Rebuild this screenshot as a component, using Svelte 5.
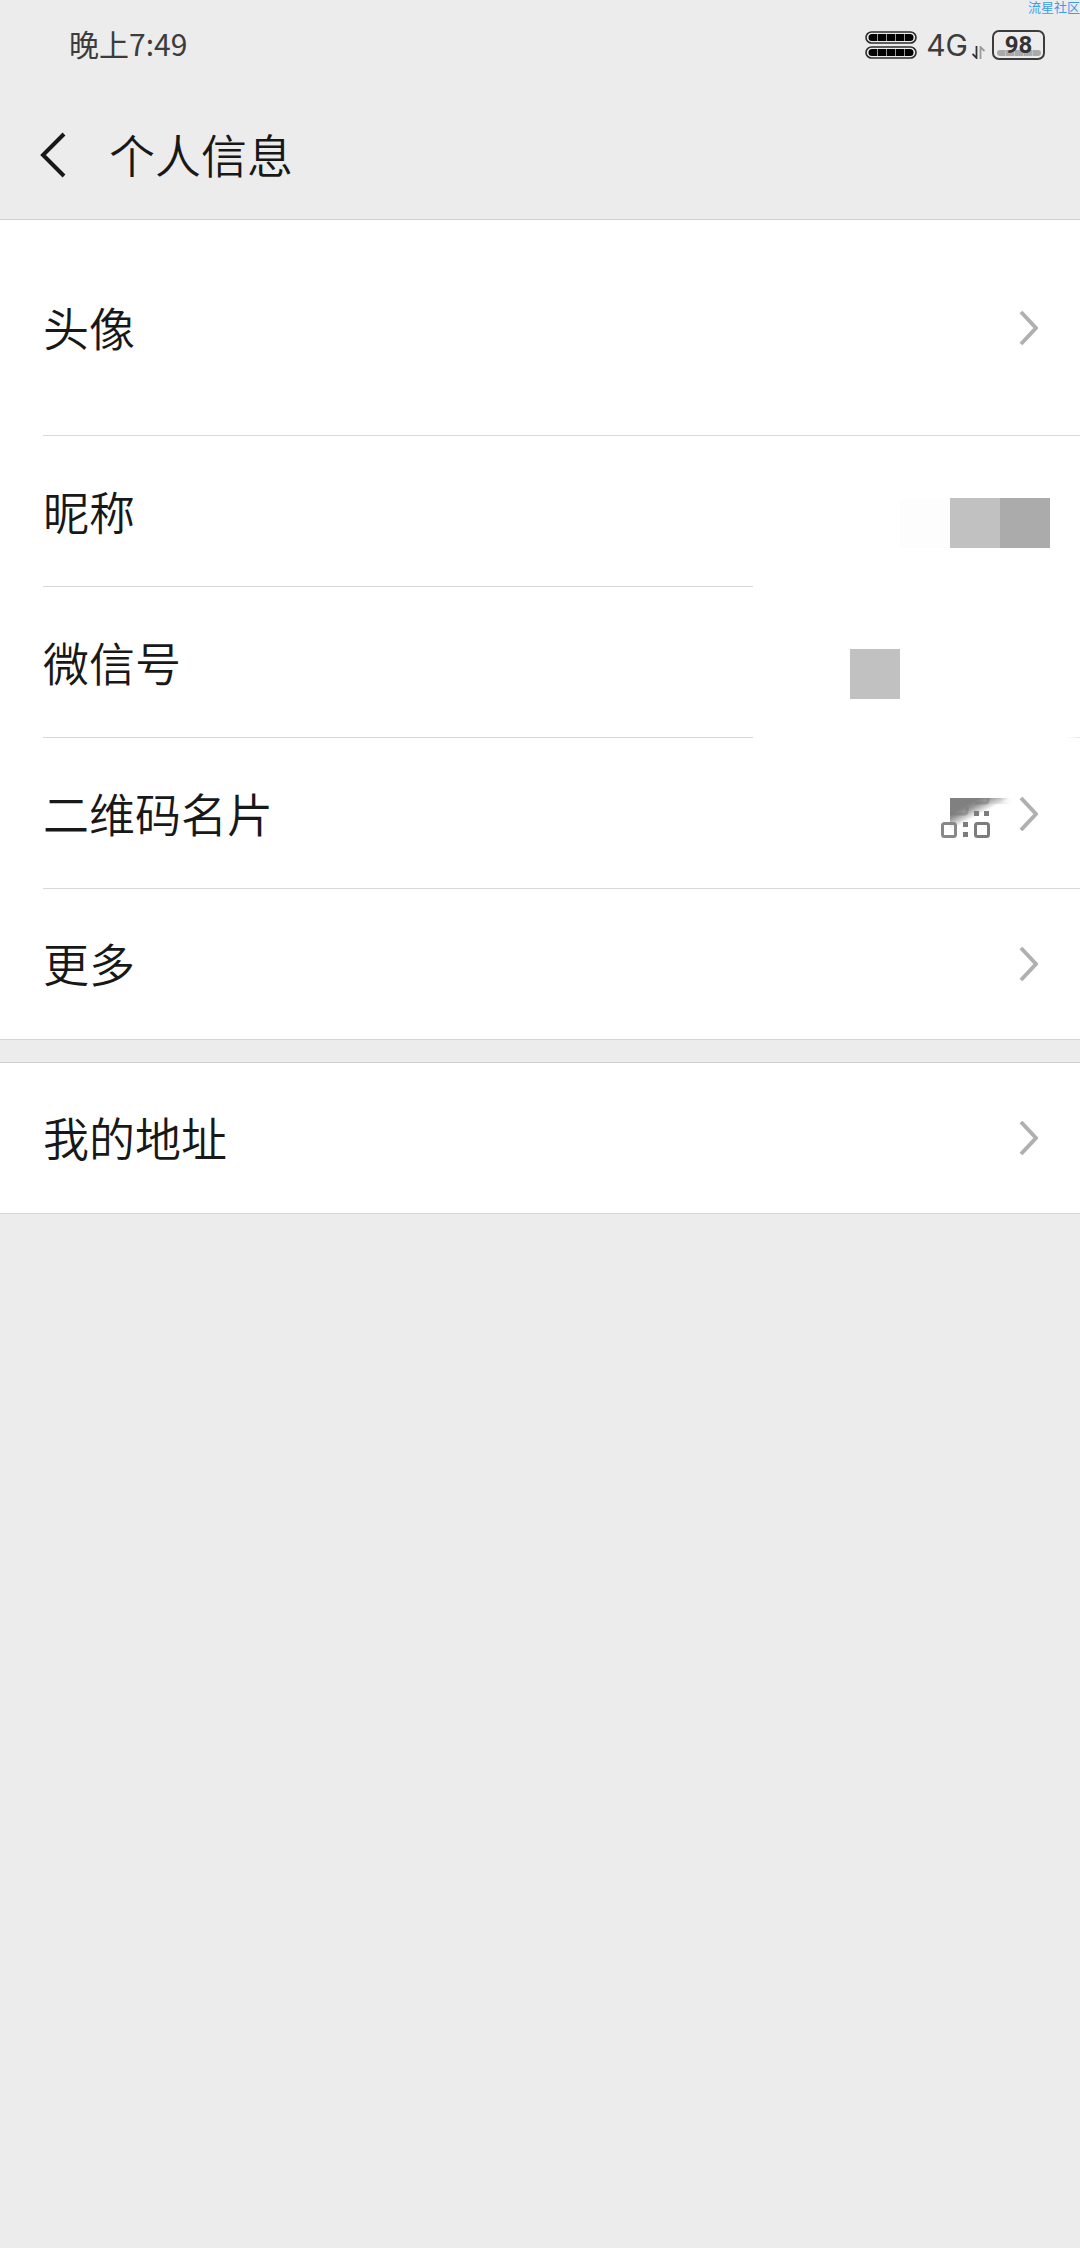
<script lang="ts">
	type Row = {
		label: string;
		size?: string;
		line?: string;
		arrow?: boolean;
		qr?: boolean;
		mask?: string[];
	};

	const groups: Row[][] = [
		[
			{ label: '头像', size: 'tall', arrow: true },
			{ label: '昵称', line: 'cut', mask: ['faint', 'grey', 'dark'] },
			{ label: '微信号', line: 'cut cut-tail', mask: ['grey', 'clear', 'clear', 'clear'] },
			{ label: '二维码名片', arrow: true, qr: true },
			{ label: '更多', arrow: true },
		],
		[{ label: '我的地址', arrow: true }],
	];

	const CELLS = [0, 1, 2, 3, 4];
</script>

<div class="page">
	<span class="watermark">流星社区</span>

	<div class="status-bar">
		<span class="time">晚上7:49</span>
		<div class="status-icons">
			<svg class="sims" viewBox="0 0 52 28" aria-hidden="true">
				{#each [0, 15] as y}
					<rect x="1" y={y + 1} width="50" height="11" rx="5.5" fill="none" stroke="#2c2c2c" stroke-width="1.6" />
					<rect x="3.5" y={y + 3} width="45" height="7" rx="3.5" fill="#000" />
					{#each CELLS.slice(1) as i}
						<rect x={3 + i * 9} y={y + 3} width="1" height="7" fill="#999" />
					{/each}
				{/each}
			</svg>
			<span class="network">4G</span>
			<svg class="traffic" viewBox="0 0 13 13" aria-hidden="true">
				<path d="M4.5 0V12L0.5 8" fill="none" stroke="#333" stroke-width="1.8" />
				<path d="M8.5 13V1L12.5 5" fill="none" stroke="#999" stroke-width="1.8" />
			</svg>
			<div class="battery">
				<svg viewBox="0 0 44 6" aria-hidden="true">
					<rect width="44" height="6" rx="3" fill="#aaa" />
					{#each CELLS.slice(1) as i}
						<rect x={i * 9 - 1} width="1" height="6" fill="#c4c4c4" />
					{/each}
				</svg>
				<span>98</span>
			</div>
		</div>
	</div>

	<header>
		<button class="back" aria-label="返回">
			<svg viewBox="0 0 26 46" aria-hidden="true">
				<path d="M24 2L3 23L24 44" fill="none" stroke="#181818" stroke-width="4" />
			</svg>
		</button>
		<h1>个人信息</h1>
	</header>

	<main>
		{#each groups as rows}
			<section class="group">
				{#each rows as row}
					<button class="row {row.size ?? ''} {row.line ?? ''}">
						<span class="label">{row.label}</span>
						{#if row.mask}
							<span class="mask">
								{#each row.mask as tone}
									<i class={tone}></i>
								{/each}
							</span>
						{/if}
						{#if row.qr}
							<svg class="qr" viewBox="0 0 78 40" aria-hidden="true">
								<defs>
									<linearGradient id="smudge" gradientUnits="userSpaceOnUse" x1="16" y1="12" x2="23" y2="25">
										<stop offset="0" stop-color="#808080" />
										<stop offset="0.3" stop-color="#808080" stop-opacity="0.85" />
										<stop offset="1" stop-color="#808080" stop-opacity="0" />
									</linearGradient>
									<linearGradient id="tail" x1="0" y1="0" x2="1" y2="0">
										<stop offset="0" stop-color="#808080" stop-opacity="0" />
										<stop offset="0.5" stop-color="#aaa" stop-opacity="0.3" />
										<stop offset="1" stop-color="#fff" stop-opacity="0" />
									</linearGradient>
								</defs>
								<rect x="9" width="66" height="36" fill="url(#smudge)" />
								<rect x="46" width="28" height="6" fill="url(#tail)" />
								<path d="M9 16H23Q26 16 26 13V9" fill="none" stroke="#777" stroke-width="3" opacity="0.5" />
								<path d="M34 5H44Q47 5 47 2V0" fill="none" stroke="#777" stroke-width="3" opacity="0.5" />
								<g fill="#7c7c7c">
									<rect x="33" y="13" width="5" height="5" />
									<rect x="43" y="13" width="5" height="5" />
									<rect x="22" y="24" width="5" height="5" />
									<rect x="22" y="34" width="5" height="5" />
								</g>
								<rect x="1.5" y="25.5" width="13" height="13" rx="2" fill="#fff" fill-opacity="0.6" stroke="#888" stroke-width="3" />
								<rect x="34.5" y="25.5" width="13" height="13" rx="2" fill="none" stroke="#7c7c7c" stroke-width="3" />
							</svg>
						{/if}
						{#if row.arrow}
							<svg class="arrow" viewBox="0 0 19 36" aria-hidden="true">
								<path d="M2 2L17 18L2 34" fill="none" stroke="#b0b0b0" stroke-width="4" />
							</svg>
						{/if}
					</button>
				{/each}
			</section>
		{/each}
	</main>
</div>

<style>
	:global(body) {
		background: #ececec;
	}

	.page {
		position: relative;
		color: #181818;
		font-family: 'Noto Sans CJK SC', sans-serif;
	}

	svg {
		display: block;
		flex-shrink: 0;
	}

	button {
		padding: 0;
		border: 0;
		background: none;
		color: inherit;
		font: inherit;
		text-align: left;
	}

	.watermark {
		position: absolute;
		top: 0;
		right: 0;
		color: #3a9fe8;
		font-size: 13px;
		line-height: 13px;
	}

	/* status bar */
	.status-bar {
		display: flex;
		align-items: center;
		justify-content: space-between;
		height: 90px;
		padding: 0 35px 0 69px;
		color: #3c3c3c;
	}

	.time {
		padding-bottom: 4px;
		font-size: 30px;
		line-height: 44px;
	}

	.status-icons {
		display: flex;
		align-items: center;
		height: 88px;
	}

	.sims {
		width: 52px;
		height: 28px;
		margin-right: 9px;
	}

	.network {
		font-family: Inter, sans-serif;
		font-size: 30px;
		font-weight: 400;
	}

	.traffic {
		width: 13px;
		height: 13px;
		margin: 14px 7px 0 4px;
	}

	.battery {
		display: grid;
		box-sizing: border-box;
		width: 53px;
		height: 30px;
		border: 2px solid #3c3c3c;
		border-radius: 7px;
	}

	.battery > * {
		grid-area: 1 / 1;
		justify-self: center;
	}

	.battery svg {
		align-self: end;
		width: 44px;
		height: 6px;
		margin-bottom: 2px;
	}

	.battery span {
		z-index: 1;
		color: #333;
		font-family: Roboto, sans-serif;
		font-size: 24px;
		font-weight: 700;
		line-height: 26px;
	}

	/* title bar */
	header {
		display: flex;
		align-items: center;
		gap: 43px;
		height: 129px;
		padding-left: 40px;
		border-bottom: 1px solid #d0d0d0;
	}

	.back svg {
		width: 26px;
		height: 46px;
	}

	h1 {
		margin: 0;
		padding-bottom: 4px;
		font-size: 46px;
		font-weight: 350;
		line-height: 66px;
	}

	/* list */
	.group {
		background: #fff;
		border-bottom: 1px solid #d5d5d5;
	}

	.group + .group {
		margin-top: 22px;
		border-top: 1px solid #d0d0d0;
	}

	.row {
		display: flex;
		align-items: center;
		box-sizing: border-box;
		width: 100%;
		height: 151px;
		padding: 0 42px 0 43px;
		background: linear-gradient(#d8d8d8, #d8d8d8) 43px 100% / 100% 1px no-repeat;
	}

	.row:last-child {
		height: 150px;
		background: none;
	}

	.row.tall {
		height: 216px;
	}

	.row.cut {
		padding-right: 30px;
		background-size: calc(100% - 370px) 1px;
	}

	.row.cut-tail {
		background-image: linear-gradient(#d8d8d8, #d8d8d8), linear-gradient(90deg, #fff, #e4e4e4);
		background-size: calc(100% - 370px) 1px, 14px 1px;
		background-position: 43px 100%, 100% 100%;
	}

	.label {
		flex: 1;
		padding-bottom: 4px;
		font-size: 46px;
		font-weight: 350;
		line-height: 66px;
	}

	.mask {
		display: flex;
		align-self: flex-end;
		margin-bottom: 39px;
	}

	.mask i {
		width: 50px;
		height: 50px;
	}

	.faint { background: #fdfdfd; }
	.grey { background: #c1c1c1; }
	.dark { background: #ababab; }

	.qr {
		width: 78px;
		height: 40px;
		margin-top: 8px;
	}

	.arrow {
		width: 19px;
		height: 36px;
	}
</style>
